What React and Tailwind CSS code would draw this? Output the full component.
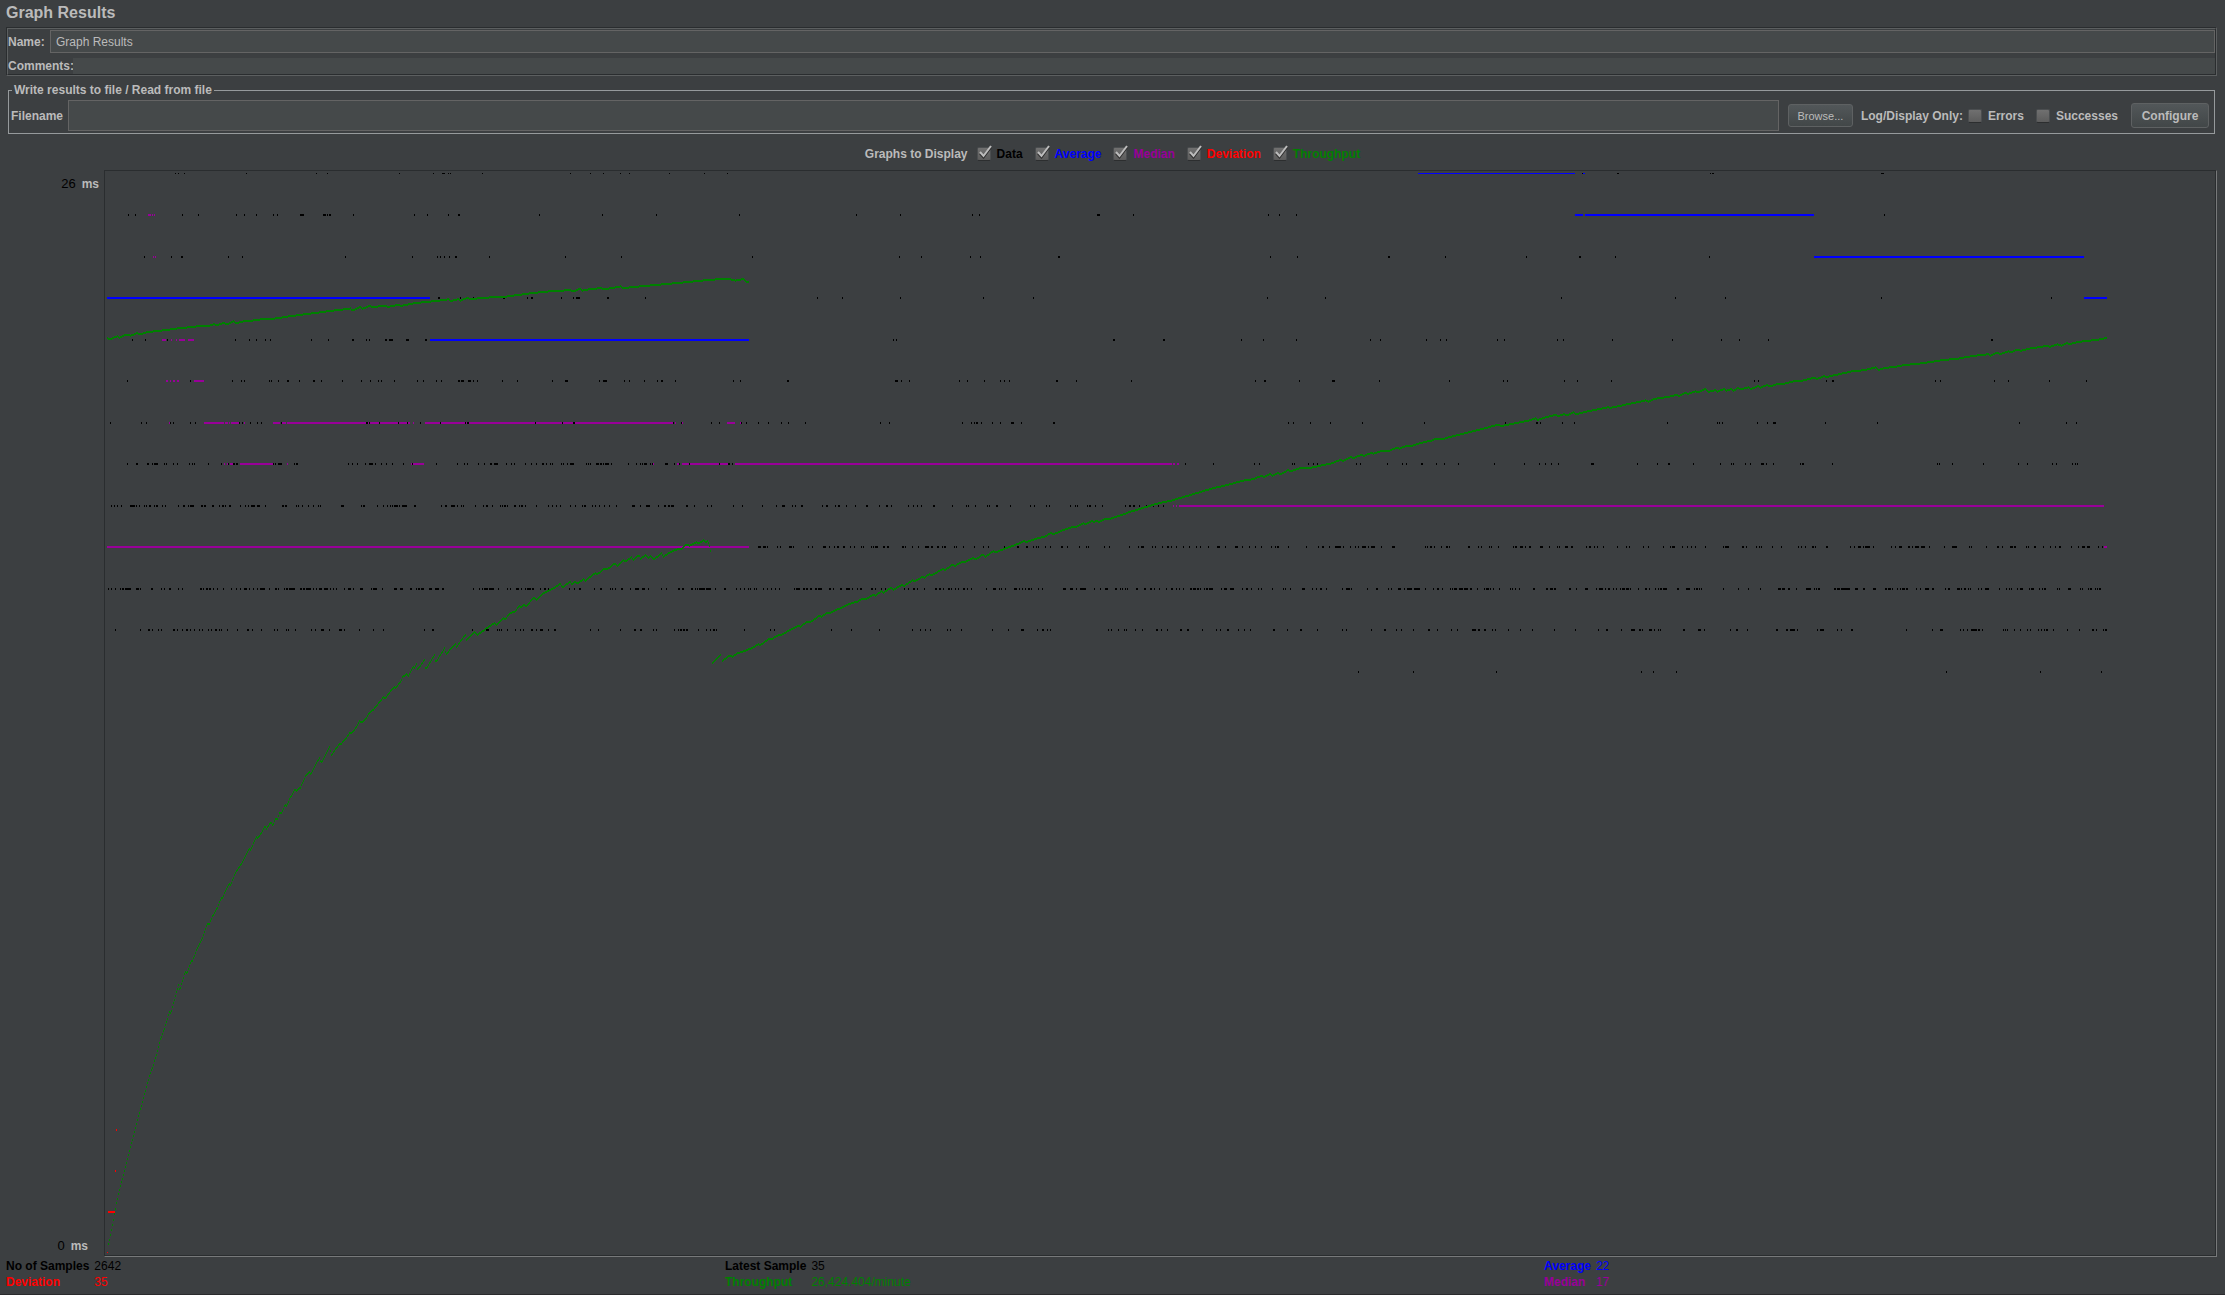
import React from "react";

// Top of each whole-millisecond row inside the plot, in pixels.
const ROWS = [2, 43, 85, 126, 168, 209, 251, 292, 334, 375, 417, 458, 500];

// The samples are recorded in three blocks; each has its own origin and resolution.
const A = { ox: -15, oy: -11, sx: 2.24, sy: 2.904 };
const B = { ox: 645, oy: -11, sx: 2.24, sy: 2.904 };
const C = { ox: 1325, oy: -11, sx: 1.972, sy: 2.904 };
const D = { ox: -15, oy: 509, sx: 3, sy: 2.658 };

const DATA = [
  [A, 0, "191 197 211 350 507 530 692 769 788-792 794 802 807 877 1076 1121 1148 1188 1208 1298 1376 1426"],
  [A, 1, "86 100 205 243 326 344 371 409 418 470-474 475-479 522-529 532 535-540 588 725 754 801 824-828 1005 1146 1267 1453"],
  [A, 2, "122 182 203 207 308 341 572 722 778 784 792 805 818-822 893 1065 1190"],
  [A, 3, "780-784 828 858 926-930 978 987 991 1056 1081 1089-1098 1158-1163 1244"],
  [A, 4, "93 124 172-175 324 357 371 391 404 494 534 586 590 619 624 660 664 669 672-679 707 710-715 750-754"],
  [A, 5, "84 225 317 339 344 401 406 422 441-446 469 500-504 518 565 606 628 646 651 680 733 747 774 787 824-828 831-838 847-853 857 866 924 957 1034 1064-1071 1141 1149-1158 1197 1208 1240 1269 1278 1282 1311 1441 1457"],
  [A, 6, "44 115 126 180 187 223 236 334 341 359 373 384 427 618-623 626 648 691 709 740 783 841 844-849 996 1058 1082-1086 1307 1323 1390 1408 1459 1470"],
  [A, 7, "82 102 106 128-132 139 143-152 165 170 185 194 222 229 234 265 294 310 320-324 327-332 411 415 422-432 458 462-466 579 586 599 615 624 627-634 638 651 662 676 702 721 776 821 837 845 870 882 896-900 906-916 931 944 949 975 988 999 1012-1016 1022 1031 1035 1054 1060 1069 1076-1084 1110 1115 1120 1133-1139 1142-1146 1148 1154-1163 1168 1206 1222 1233 1237 1241-1247 1254 1259 1288-1294 1309 1320 1341 1410 1429-1434 1439"],
  [A, 8, "48 53 60-63 70 90-101 104 109 120 126 132-137 144 148-152 162 167 198 208-213 219 224-233 249-253 255-260 273-278 290 296-300 303 311-316 337 348 353 361-370 373-379 393 429 433 437-441 462 467 476 489 500 511 516 562-569 608 612-616 642 657 666 671 676 681-690 693 698 702-712 725 729 787 796-800 808-818 823 830 836 863 881 887-892 901 919 924 927-932 935 950-954 961 966-970 975 998 1027 1035 1043 1053 1076 1087 1103 1107-1111 1125 1132 1141 1152 1163 1179 1213 1215-1221 1231 1245-1254 1273 1285-1290 1295-1299 1301-1308 1334 1338 1352 1381 1392 1441 1461"],
  [A, 10, "41 46 57-60 68 72-76 78-92 103-110 113 136 140 158 165 176-180 198 207 246-251 254 259 263 267-271 275 285 298 315 326 336 345-352 356 365 374 381-392 400 415-419 421 434 439-443 446-459 470-474 477-481 484-495 500 506 514-521 525-535 538 545 550 570 578-585 590 604 608-612 629 635-645 655 682-688 694-701 717-721 730 735-740 742-748 759-766 772-780 788-793 859 872 877 882-890 894-906 915 933 940 954-960 966 975 978-986 989 993 1008 1017-1021 1027 1036 1074 1085 1096-1100 1128 1143-1147 1164 1170 1175 1189-1194 1209 1221-1229 1236-1242 1251 1278 1291 1317-1321 1327-1331 1346-1351 1355 1360 1364-1378 1380-1391 1401 1420-1425 1446 1456 1465 1474"],
  [A, 11, "55 111 130-134 138 152 158 186-191 195 205 215-219 223 233 245 252 264 270 279 283 288 294 306 330 352-357 364 382 413 418 438 443 460 496 505 517-523 535 558-564 568 602 635 657 749 766-771 855 888-894 912 916 921 935 953 964 970 987 991 1000 1009-1015 1025 1039-1044 1119 1139 1188 1218-1223 1231-1235 1260 1268 1308 1316 1322-1326 1328-1332 1334-1339 1363 1379 1388 1396-1400 1403 1464"],
  [B, 1, "237-240 335 497-500 514 777-784 857 1160-1163 1186 1222"],
  [B, 2, "4-7 333 382 492 516 690-694 1164 1225-1228 1429-1434"],
  [B, 3, "151 207 337 521 633 1157 1287"],
  [B, 4, "320-323 326 813-818 924 927-930 1099 1150 1224 1388 1412 1515"],
  [B, 5, "82 86 324 327-332 339 357 469 487 525 559 568 581 685-690 731 853-856 1132 1151-1156 1229 1304-1310 1410"],
  [B, 6, "19 40-43 69-72 84 124 292 311-314 474 496 502 506-511 517-520 541 561 585-591 606 679-683 1204 1216-1219 1254-1257 1300 1370 1509"],
  [B, 7, "974-977 1038 1128 1141 1215 1219 1251 1262 1271 1357-1360 1366-1369 1426 1461 1470 1503-1508"],
  [B, 8, "26 59 72-78 95 101 114-119 162 170-175 191 197-202 214 236 259 263 288 305-309 315 353 364 373 384 410-414 453 483 488-491 505 530 536 551-556 582-585 628 637 664 669 716 729 733 755 759-764 773 788-791 839 848 852 858-862 872 888 893 903 915 926"],
  [B, 9, "17 20-25 29-36 39 61 67 87-94 97 131 139 164-170 177 188 194-198 208-213 225 232-235 249 253 270 276 280-287 297-302 307-311 340-345 347 362 377 392-401 405-410 419-424 429 435-440 457 462 476 501 523 533 570 598-603 618-622 635 640 645 661 673 697-701 709 736 753 758 794 805 850 870 875 878-883 901 907 922 934-939 942 954 971 984 998 1009 1027 1046-1052 1065 1086-1093 1101 1118 1131 1144 1166 1177 1180-1185 1206 1246 1273 1282-1286 1297 1310-1324 1329 1345 1356 1363 1370-1380 1384 1391 1394-1400 1414 1438-1444 1513 1517"],
  [B, 10, "1 10 14 28 37 46 57 64 99-102 104-114 119-123 126-130 135-139 146-150 152-161 176 180 185 202-206 215-224 229 240 246-250 272-276 279 294 303 318 346 355 365-370 375 389 414-419 423-428 433 444-448 451 460 467 477-482 485 494 528 544-551 557 563 572 591-597 602 609 617 623-627 630 646 653 701-707 717-723 731 739-752 771 785 795-802 818-823 829 834 840 845 865-869 883-887 895-899 906 917 931 943-948 955 961 969 986-990 992-999 1002-1006 1009 1018 1022-1026 1028-1036 1055 1061-1068 1075-1085 1103 1112-1116 1122 1137 1144 1170 1193 1198 1209 1236-1243 1258 1267 1277-1281 1290 1327 1335-1343 1347 1381 1402-1406 1428 1436 1452-1458 1466 1472-1484 1487-1501 1511"],
  [B, 11, "44 53 181-184 227 290 362 380 391 404 441-444 449 472 543 579 607-613 642 654-659 666 671 803 808 824-827 837 843 863 877 909-914 920 933 963-967 979-983 1013 1043 1053 1068-1073 1094 1106 1121 1172-1176 1202 1232-1236 1269 1325 1334 1392 1420-1425 1448 1459 1486 1519-1523"],
  [B, 12, "1361 1484"],
  [C, 0, "299 369-373 553 556-560 890-895"],
  [C, 1, "896"],
  [C, 2, "29 190 294-298 364 551"],
  [C, 3, "259 484 581 889 1224"],
  [C, 4, "19 31 133 145 250 263 358 478 573 610 666 1106 1109"],
  [C, 5, "37 143 151 265 289 356 638 646 780 793-797 995 1005 1113 1139 1220 1293"],
  [C, 6, "147 209-213 216 261 283 468 565 569 575 644 664 677-682 778 881 1161 1255 1273"],
  [C, 7, "11 27 56 127 186 214 226 238 253 318-323 409 447 469-473 518 571 593 597 622 632 653-659 662 676 729 734-738 792 999 1003 1029 1090 1159 1177 1226 1234 1267 1271 1275"],
  [C, 9, "0-4 7 21 32-36 38 75-79 94 100 117 121 135 163 168-172 178-183 188 195-199 217-223 234 251 255 266-272 278-282 307 314-318 324 330 342 368 386 393 421 429 459 474 478-483 496 506 514 522 543 578 582-590 615-619 624 642 648 652 674 693 725 731 739 753-757 760 781-785 829 837 844-850 853 858-868 873 910 916 924 927-931 943-947 950 956 959-964 968-976 985 1013 1030-1039 1062 1066 1096 1118-1122 1127 1143 1146-1150 1152-1156 1175 1180 1191-1195 1208 1222 1232 1241-1245 1265 1277 1286-1292 1295 1298-1302 1317 1326"],
  [C, 10, "5 14-18 23 40 44 47-53 57-65 67-75 79-83 92 106 110-116 119 125 137 157 161 167 175 203-207 229-233 236 239-243 245-249 274-278 287 305 308-312 328 333-341 346 351-355 360 366 374 379-385 387-392 395 411 424-428 431 443 450 454-458 460-467 487-491 504 507-513 520 524-527 530 535 577 608 628 650 686-692 694-700 706-710 721 742-751 758 762 765-769 797-801 803-809 811-828 838-844 854-858 874-880 897-901 903-909 912 920 926 931-937 939-943 958 967 976-984 990-994 1015 1022-1026 1039-1045 1048 1053-1057 1060 1064 1080 1086 1094 1097-1103 1123 1135 1141 1145 1157 1164-1170 1182 1185-1191 1200 1206 1211-1215 1236 1240 1258-1264 1281 1285 1297 1302-1306 1311 1315 1319-1323"],
  [C, 11, "13 42 54 83-91 95-99 107-110 123 129 153 177 202 244 285 332 347-351 376 396-404 412-416 419 432-438 441 449 453 499-503 528 531-535 541 591 604-607 626 682-686 702-706 710-720 723 764 769-777 802 810 830-834 938 989 1006-1012 1046 1052 1058 1067-1079 1081-1085 1088 1129 1133 1137 1151 1163 1178 1184 1198 1204 1210 1215-1219 1228 1257 1279 1306-1310 1313 1328 1331-1335"],
  [C, 12, "131 417 439 486 1017 1202 1324"],
];

const MEDIAN = [
  [A, 1, "130-137 139 143"],
  [A, 2, "141 145-148"],
  [A, 4, "162-170 182 192 200-214 220-234"],
  [A, 5, "170-175 180 185-189 195-199 234-256"],
  [A, 6, "178 256-300 302-308 312 316-334 344 410-426 428-440 442-718 724 750-1260 1262-1306 1311 1325 1427-1444 1455"],
  [A, 7, "301 306 314-320 336-410 441 719-749 1260 1291 1314-1318 1325-1427 1444-1450 1452-1480"],
  [A, 9, "38-1476"],
  [B, 7, "0-946 948-952 956-960"],
  [B, 8, "947 955 960-1525"],
  [C, 8, "0-1330"],
  [C, 9, "1330-1336"],
];

const AVERAGE = [
  [A, 3, "38-762"],
  [A, 4, "762-1476"],
  [B, 0, "1496-1525"],
  [C, 0, "0-286 302-306"],
  [C, 1, "286-302 306-757"],
  [C, 2, "757-1290"],
  [C, 3, "1290-1335"],
];

const THROUGHPUT = [
  [
    [D, "52,1509 58,1483 70,1430 78,1390 90,1345 100,1312 110,1278 120,1242 130,1208 140,1172 152,1135 164,1095 178,1050 190,1020 200,990 210,955 222,927 230,903 238,880 241,886 253,846 264,812 268,824 284,776 290,779 302,746 306,746 320,714 337,683 352,645 356,650 366,628 380,607 392,580 397,580 404,562 416,542 420,546 434,514 452,490 470,460 476,449 480,452 498,417 502,420 516,402 524,388 527,396 532,390 542,378 547,386 556,368 560,373 568,352 572,355 584,332 587,336 600,312 613,292 618,294 630,286 645,256 658,244 661,252 675,226 688,205 691,221 697,214 718,175 722,202 738,180 748,170 752,170 765,157 778,140 784,142 796,127 808,108 811,114 826,104 836,88 850,78 866,60 880,44 884,50 898,32 912,18 915,22 932,2"],
    [A, "698,1503 709,1491 711,1501 724,1470 726,1476 730,1463 733,1480 748,1451 751,1480 772,1434 773,1460 794,1416 796,1436 818,1404 820,1414 840,1378 842,1394 860,1370 867,1379 885,1362 905,1345 910,1350 925,1330 928,1335 940,1315 951,1312 962,1292 964,1300 970,1292 977,1296 993,1270 998,1278 1015,1258 1036,1245 1053,1230 1056,1242 1075,1224 1078,1232 1085,1225 1090,1230 1105,1217 1108,1222 1130,1200 1136,1203 1150,1186 1158,1188 1174,1172 1180,1179 1194,1162 1198,1166 1212,1153 1216,1162 1229,1147 1232,1158 1244,1147 1250,1156 1255,1150 1262,1160 1280,1141 1283,1152 1300,1138 1316,1130 1322,1131 1335,1117 1342,1120 1358,1110 1364,1113 1374,1103 1378,1110 1383,1107 1386,1118 1389,1138"],
  ],
  [[A, "1392,1461 1413,1435"]],
  [
    [A, "1414,1457 1430,1440 1438,1442 1450,1432 1475,1421"],
    [B, "0,1420 18,1406 22,1409 42,1390 46,1393 64,1378 68,1380 90,1364 108,1352 112,1355 128,1340 134,1342 154,1324 160,1326 172,1314 178,1316 216,1292 240,1282 250,1274 260,1274 275,1262 280,1265 293,1252 297,1257 314,1243 321,1248 337,1235 345,1236 363,1220 368,1224 384,1211 390,1213 400,1203 408,1205 430,1188 436,1190 452,1176 458,1179 474,1166 480,1168 498,1156 506,1159 520,1146 527,1152 543,1136 550,1140 570,1128 590,1120 612,1107 618,1109 640,1100 660,1093 672,1083 680,1086 700,1075 722,1066 728,1067 745,1055 750,1058 765,1048 770,1051 776,1048 780,1052 795,1042 800,1044 820,1036 850,1022 880,1010 910,998 940,990 980,975 1010,963 1040,952 1070,943 1100,932 1125,927 1145,917 1150,920 1165,912 1170,917 1182,909 1188,912 1205,900 1210,904 1230,895 1250,895 1290,884 1305,880 1322,870 1328,874 1346,862 1350,866 1368,856 1374,859 1392,850 1396,853 1412,846 1430,845 1448,835 1454,838 1472,829 1478,832 1500,822 1520,816"],
    [C, "0,816 10,810 22,811 50,800 78,790 100,782 130,770 142,772 165,765 190,758 208,750 212,755 230,746 247,740 250,744 264,738 270,741 282,733 288,738 310,730 350,718 354,720 380,712 425,698 430,702 440,694 458,690 470,688 486,682 490,685 503,676 508,679 523,672 527,675 543,664 547,674 562,668 566,673 580,664 584,670 592,665 598,670 606,663 614,665 627,660 631,666 646,656 650,662 664,653 669,658 680,652 700,649 720,641 728,643 745,636 757,632 762,636 775,628 782,630 800,624 830,614 842,613 860,609 878,602 883,610 895,604 915,601 935,595 955,593 985,587 1010,581 1040,577 1070,569 1100,564 1104,568 1116,560 1124,563 1140,556 1144,559 1156,551 1164,554 1180,548 1216,540 1222,543 1236,535 1244,539 1254,532 1262,534 1275,529 1290,526 1310,523 1328,519 1334,515"],
  ],
  [
    [A, "38,516 42,521 62,511 64,516 80,507 90,510 106,502 110,507 130,499 150,497 190,490 240,483 262,483 275,477 285,479 300,473 304,478 322,468 325,474 345,468 365,466 385,462 410,461 440,455 480,448 540,438 572,433 583,431 586,437 605,427 609,432 627,423 632,428 650,424 670,426 690,420 695,424 720,417 740,414 790,407 802,404 806,410 825,404 828,409 845,400 850,405 880,400 930,397 980,388 1030,381 1060,379 1074,376 1080,382 1097,374 1102,379 1120,375 1145,372 1150,376 1188,367 1192,372 1240,366 1300,359 1380,349 1410,346 1432,346 1445,350 1462,346 1468,353 1476,354"],
  ],
];

function rowPath(blocks) {
  let d = "";
  for (const [o, row, list] of blocks) {
    const h = row === 0 ? 1 : 2;
    for (const item of list.split(" ")) {
      const [a, b] = item.split("-").map(Number);
      const x = Math.round(o.ox + a / o.sx);
      const w = b ? Math.max(1, Math.round((b - a) / o.sx)) : 1;
      d += `M${x} ${ROWS[row]}h${w}v${h}h-${w}z`;
    }
  }
  return d;
}

// One mark, two pixels high, for every pixel column of a curve.
function curvePath(curves) {
  let d = "";
  for (const curve of curves) {
    const pts = curve.flatMap(([o, list]) =>
      list.split(" ").map((p) => {
        const [x, y] = p.split(",").map(Number);
        return [o.ox + x / o.sx, o.oy + y / o.sy];
      })
    );
    let i = 0;
    const end = Math.floor(pts[pts.length - 1][0]);
    for (let x = Math.ceil(pts[0][0]); x <= end; x++) {
      while (i < pts.length - 2 && pts[i + 1][0] < x) i++;
      const [x0, y0] = pts[i];
      const [x1, y1] = pts[i + 1];
      const y = Math.round(y0 + ((y1 - y0) * (x - x0)) / (x1 - x0)) - 1;
      d += `M${x} ${y}h1v2h-1z`;
    }
  }
  return d;
}

const PATHS = {
  data: rowPath(DATA),
  median: rowPath(MEDIAN),
  average: rowPath(AVERAGE),
  throughput: curvePath(THROUGHPUT),
  deviation: "M3 1040h7v2h-7zM11 958h1v2h-1zM10 999h1v2h-1zM2 1081h1v1h-1z",
};

function Chart() {
  return (
    <svg className="block h-full w-full" shapeRendering="crispEdges" role="img" aria-label="Response time graph">
      <path d={PATHS.average} fill="#0000ff" />
      <path d={PATHS.median} fill="#990099" />
      <path d={PATHS.data} fill="#000000" />
      <path d={PATHS.throughput} fill="#008000" />
      <path d={PATHS.deviation} fill="#ff0000" />
    </svg>
  );
}

function Check({ label, color, checked }) {
  return (
    <label className={`flex items-center gap-[6px] ${color}`}>
      <span className="relative block h-[14px] w-[14px]">
        <input
          type="checkbox"
          defaultChecked={checked}
          className="peer block h-[14px] w-[14px] appearance-none rounded-[2px] border border-[#4b4e50] border-b-[#2c2e2f] bg-linear-to-b from-[#707070] to-[#5c5c5c]"
        />
        <svg viewBox="0 0 16 16" className="pointer-events-none absolute -top-[2px] left-0 hidden h-4 w-4 peer-checked:block" fill="none">
          <path d="M3 8.5L6.5 12.5L14 2.5" stroke="#2b2b2b" strokeWidth="2" />
          <path d="M3 7L6.5 11L14 1" stroke="#bdbdbd" strokeWidth="2" />
        </svg>
      </span>
      {label}
    </label>
  );
}

function Stat({ label, value, color }) {
  return (
    <tr className={color}>
      <th scope="row" className="p-0 pr-[5px] text-left font-bold">{label}</th>
      <td className="p-0 font-normal">{value}</td>
    </tr>
  );
}

const BUTTON = "rounded-[3px] border border-[#5e6162] bg-linear-to-b from-[#525759] to-[#424748]";

export default function App() {
  return (
    <main className="flex min-h-screen flex-col border-b border-[#2a2b2d] bg-[#3c3f41] font-['Liberation_Sans',Arial,sans-serif] text-[12px] leading-4 font-bold text-[#bbbbbb]">
      <h1 className="px-[6px] pt-[3px] pb-[4px] text-[16px] leading-5">Graph Results</h1>

      <section className="mr-2 ml-[6px] border border-t-[#2a2d2f] border-r-[#5c5f60] border-b-[#5c5f60] border-l-[#2a2d2f]">
        <div className="border border-t-[#5c5f60] border-r-[#2a2d2f] border-b-[#2a2d2f] border-l-[#5c5f60]">
          <div className="flex items-center gap-[6px] pt-px">
            <label htmlFor="name" className="w-9 whitespace-nowrap">Name:</label>
            <input id="name" defaultValue="Graph Results" className="h-[23px] min-w-0 flex-1 border border-[#646464] bg-[#45494a] px-[5px] font-normal outline-none" />
          </div>
          <div className="mt-[5px] flex items-center">
            <label htmlFor="comments" className="w-[65px] whitespace-nowrap">Comments:</label>
            <input id="comments" className="h-4 min-w-0 flex-1 bg-[#45494a] font-normal outline-none" />
          </div>
        </div>
      </section>

      <fieldset className="mt-[6px] mr-[10px] ml-2 min-w-0 border border-[#969a9c] pr-[5px] pb-[2px] pl-[2px]">
        <legend className="ml-px px-[2px]">Write results to file / Read from file</legend>
        <div className="flex items-center pt-[2px]">
          <label htmlFor="filename" className="w-[57px]">Filename</label>
          <input id="filename" className="h-[31px] min-w-0 flex-1 border border-[#646464] bg-[#45494a] px-[5px] font-normal outline-none" />
          <button type="button" className={`${BUTTON} ml-[9px] h-[23px] w-[65px] text-[11px] leading-4 font-normal`}>Browse...</button>
          <span className="ml-2 whitespace-nowrap">Log/Display Only:</span>
          <div className="ml-[5px] flex gap-[12px]">
            <Check label="Errors" color="text-[#bbbbbb]" />
            <Check label="Successes" color="text-[#bbbbbb]" />
          </div>
          <button type="button" className={`${BUTTON} ml-[13px] h-[25px] w-[78px]`}>Configure</button>
        </div>
      </fieldset>

      <div className="flex items-center justify-center gap-3 pt-[12px] pb-[8px]">
        <span className="-mr-[3px]">Graphs to Display</span>
        <Check label="Data" color="text-black" checked />
        <Check label="Average" color="text-[#0000ff]" checked />
        <Check label="Median" color="text-[#990099]" checked />
        <Check label="Deviation" color="text-[#ff0000]" checked />
        <Check label="Throughput" color="text-[#008000]" checked />
      </div>

      <div className="mr-2 flex flex-1">
        <div className="flex w-[104px] flex-col justify-between pt-[6px] pb-[3px]">
          <div className="flex justify-end gap-[6px] pr-[5px]">
            <span className="text-[13px] font-normal text-black">26</span>
            <span>ms</span>
          </div>
          <div className="flex justify-end gap-[6px] pr-4">
            <span className="text-[13px] font-normal text-black">0</span>
            <span>ms</span>
          </div>
        </div>
        <div className="min-w-0 flex-1 border border-t-[#2a2d2f] border-r-[#77797a] border-b-[#77797a] border-l-[#2a2d2f]">
          <div className="h-full border-r border-b border-[#2a2d2f]">
            <Chart />
          </div>
        </div>
      </div>

      <footer className="grid grid-cols-[719fr_819fr_681fr] pt-[1px] pb-[4px] pl-[6px]">
        <table className="w-max border-collapse self-start">
          <tbody>
            <Stat label="No of Samples" value="2642" color="text-black" />
            <Stat label="Deviation" value="35" color="text-[#ff0000]" />
          </tbody>
        </table>
        <table className="w-max border-collapse self-start">
          <tbody>
            <Stat label="Latest Sample" value="35" color="text-black" />
            <Stat label="Throughput" value="26,424.404/minute" color="text-[#008000]" />
          </tbody>
        </table>
        <table className="w-max border-collapse self-start">
          <tbody>
            <Stat label="Average" value="22" color="text-[#0000ff]" />
            <Stat label="Median" value="17" color="text-[#990099]" />
          </tbody>
        </table>
      </footer>
    </main>
  );
}
